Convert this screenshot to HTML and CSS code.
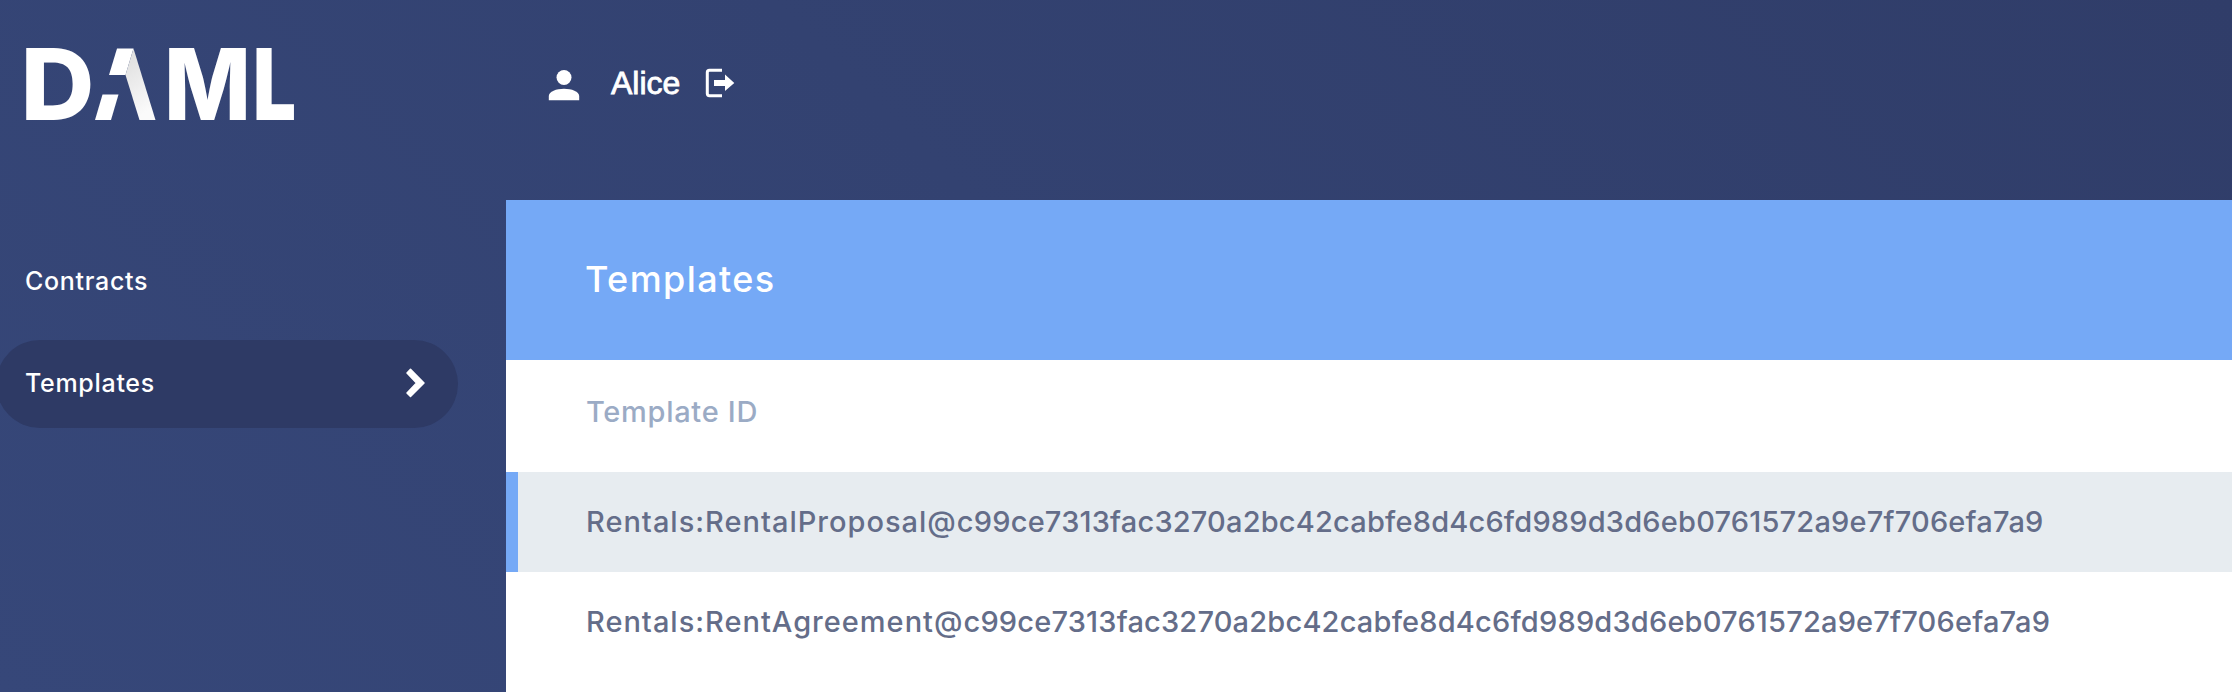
FILE: index.html
```
<!DOCTYPE html>
<html lang="en">
<head>
<meta charset="utf-8">
<title>DAML Navigator</title>
<link rel="stylesheet" href="styles.css">
</head>
<body>
<div class="app">
  <aside class="sidebar">
    <svg class="logo" viewBox="0 0 270 74" role="img" aria-label="DAML">
      <defs>
        <linearGradient id="fold" x1="0" y1="0" x2="0.3" y2="1">
          <stop offset="0" stop-color="#dcdcdc"/>
          <stop offset="1" stop-color="#fafafa"/>
        </linearGradient>
      </defs>
      <text class="logo-letter" x="-5.500" y="73" textLength="74" lengthAdjust="spacingAndGlyphs">D</text>
      <polygon fill="#fff" points="91,1.500 107.500,1.500 99.500,28 83,28"/>
      <polygon fill="#fff" points="76.500,47.500 92.500,47.500 85,73 69,73"/>
      <polygon fill="url(#fold)" points="107.500,1.500 129.500,73 113.500,73 99.500,28"/>
      <text class="logo-letter" x="138" y="73" textLength="87" lengthAdjust="spacingAndGlyphs">M</text>
      <text class="logo-letter logo-letter-wide" x="227" y="73" textLength="43" lengthAdjust="spacingAndGlyphs">L</text>
    </svg>
    <nav class="nav">
      <a class="nav-item">Contracts</a>
      <a class="nav-item nav-item-active">Templates
        <svg class="chevron" viewBox="0 0 20 30"><path d="M1 5 4.500 1.300 18 15 4.500 28.500 1 25 10.500 15z" fill="#fff" stroke="#fff" stroke-width="1.500" stroke-linejoin="round"/></svg>
      </a>
    </nav>
  </aside>
  <main class="main">
    <header class="topbar">
      <svg class="user-icon" viewBox="0 0 32 32"><circle cx="16" cy="8.500" r="7.500"/><path d="M.8 31.300V27C.8 22.500 8.500 19.700 16 19.700S31.200 22.500 31.200 27v4.300z"/></svg>
      <span class="user-name">Alice</span>
      <svg class="exit-icon" viewBox="0 0 30 30"><path d="M17 2.300H4.500Q2.300 2.300 2.300 4.500V25.500Q2.300 27.700 4.500 27.700H17" fill="none" stroke="#fff" stroke-width="3"/><path d="M9 12h11V6.500L29.300 15 20 23v-5H9z" fill="#fff"/></svg>
    </header>
    <h1 class="title">Templates</h1>
    <section class="table">
      <div class="head">Template ID</div>
      <div class="row row-active"><span><span class="template-name">Rentals:RentalProposal@</span>c99ce7313fac3270a2bc42cabfe8d4c6fd989d3d6eb0761572a9e7f706efa7a9</span></div>
      <div class="row"><span><span class="template-name">Rentals:RentAgreement@</span>c99ce7313fac3270a2bc42cabfe8d4c6fd989d3d6eb0761572a9e7f706efa7a9</span></div>
    </section>
  </main>
</div>
</body>
</html>
```
FILE: styles.css
```
* { box-sizing: border-box; }
body { margin: 0; font-family: Inter, sans-serif; color: #fff; }
.app {
  display: flex;
  width: 2232px;
  height: 692px;
  overflow: hidden;
  background: linear-gradient(45deg, #364779 0%, #303d69 100%);
}
.sidebar { width: 506px; padding-top: 47px; }
.logo { display: block; width: 270px; height: 74px; margin-left: 26px; overflow: visible; }
.logo-letter { font: 800 99px Inter, sans-serif; fill: #fff; }
.logo-letter-wide { font-weight: 900; }
.nav { margin-top: 117px; }
.nav-item {
  display: flex;
  align-items: center;
  justify-content: space-between;
  width: 462px;
  height: 88px;
  margin-left: -4px;
  padding: 0 32px 2px 29px;
  border-radius: 44px;
  font-size: 25px;
  font-weight: 450;
  letter-spacing: .7px;
}
.nav-item + .nav-item { margin-top: 14px; }
.nav-item-active { background: #2e3a65; }
.chevron { width: 20px; height: 30px; }
.main { flex: 1; min-width: 0; }
.topbar { display: flex; align-items: center; height: 200px; padding: 0 0 34px 42px; }
.user-icon { width: 32px; height: 32px; margin-top: 4px; fill: #fff; }
.user-name {
  margin-left: 31px;
  font: 32px "Liberation Sans", sans-serif;
  -webkit-text-stroke: .8px #fff;
}
.exit-icon { width: 30px; height: 30px; margin-left: 25px; }
.title {
  display: flex;
  align-items: center;
  height: 160px;
  margin: 0;
  padding: 0 0 2px 79px;
  background: #75a9f6;
  font-size: 36px;
  font-weight: 450;
  letter-spacing: 1.4px;
}
.table { height: 332px; background: #fff; font-size: 29px; font-weight: 450; }
.head, .row { display: flex; align-items: center; padding-left: 80px; white-space: nowrap; }
.head { height: 112px; padding-bottom: 10px; color: #9babc5; letter-spacing: .7px; }
.row { height: 100px; padding-bottom: 2px; color: #646d89; letter-spacing: .19px; }
.row-active { padding-left: 68px; border-left: 12px solid #75a9f6; background: #e7ecf0; }
.template-name { letter-spacing: 1px; }
```
